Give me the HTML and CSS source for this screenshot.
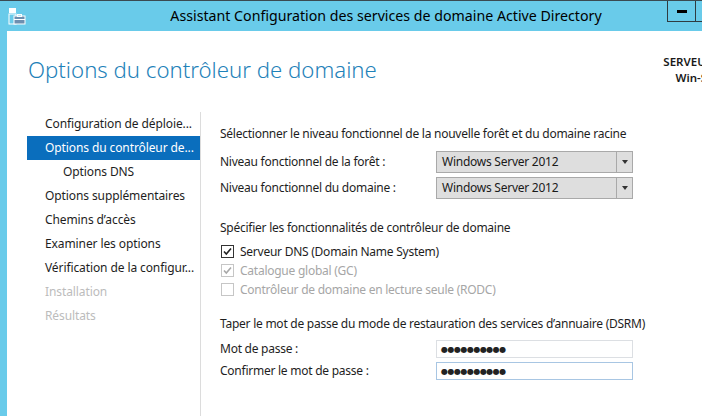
FILE: index.html
```html
<!DOCTYPE html>
<html lang="fr">
<head>
<meta charset="utf-8">
<title>Assistant Configuration des services de domaine Active Directory</title>
<link rel="stylesheet" href="styles.css">
</head>
<body>
<div class="window">
  <div class="titlebar">
    <div class="app-icon">
      <svg width="18" height="18" viewBox="0 0 18 18">
        <rect x="1" y="1" width="7" height="5" fill="#ffffff"/>
        <rect x="1" y="7" width="7" height="10" fill="none" stroke="#ffffff" stroke-width="1"/>
        <rect x="6" y="9" width="11" height="8" fill="#6d8fb0" stroke="#ffffff" stroke-width="1"/>
        <rect x="9.5" y="7.5" width="4" height="2" fill="none" stroke="#ffffff" stroke-width="1"/>
        <line x1="6" y1="12.5" x2="17" y2="12.5" stroke="#ffffff" stroke-width="1"/>
      </svg>
    </div>
    <div class="title">Assistant Configuration des services de domaine Active Directory</div>
    <div class="buttons">
      <div class="btn btn-min"><span class="min-bar"></span></div>
      <div class="btn btn-max"></div>
      <div class="btn btn-close"></div>
    </div>
  </div>
  <div class="frame">
    <div class="client">
      <div class="header">
        <h1 class="heading">Options du contrôleur de domaine</h1>
        <div class="server">
          <div class="server-label">SERVEUR CIBLE</div>
          <div class="server-name">Win-SRV2012</div>
        </div>
      </div>
      <div class="body">
        <nav class="nav">
          <div class="nav-item">Configuration de déploie...</div>
          <div class="nav-item selected">Options du contrôleur de...</div>
          <div class="nav-item sub">Options DNS</div>
          <div class="nav-item">Options supplémentaires</div>
          <div class="nav-item">Chemins d’accès</div>
          <div class="nav-item">Examiner les options</div>
          <div class="nav-item">Vérification de la configur...</div>
          <div class="nav-item disabled">Installation</div>
          <div class="nav-item disabled">Résultats</div>
        </nav>
        <div class="content">
          <div class="section-title">Sélectionner le niveau fonctionnel de la nouvelle forêt et du domaine racine</div>
          <div class="form-row">
            <div class="label">Niveau fonctionnel de la forêt :</div>
            <div class="combo"><span class="combo-text">Windows Server 2012</span><span class="combo-arrow"><span class="tri"></span></span></div>
          </div>
          <div class="form-row">
            <div class="label">Niveau fonctionnel du domaine :</div>
            <div class="combo"><span class="combo-text">Windows Server 2012</span><span class="combo-arrow"><span class="tri"></span></span></div>
          </div>
          <div class="section-title second">Spécifier les fonctionnalités de contrôleur de domaine</div>
          <div class="check-row">
            <span class="box checked">
              <svg width="11" height="11" viewBox="0 0 11 11"><path d="M2 5.5 L4.3 8 L9 2.5" fill="none" stroke="#222222" stroke-width="1.6"/></svg>
            </span>
            <span class="check-label">Serveur DNS (Domain Name System)</span>
          </div>
          <div class="check-row dis">
            <span class="box checked">
              <svg width="11" height="11" viewBox="0 0 11 11"><path d="M2 5.5 L4.3 8 L9 2.5" fill="none" stroke="#a8a8a8" stroke-width="1.6"/></svg>
            </span>
            <span class="check-label">Catalogue global (GC)</span>
          </div>
          <div class="check-row dis">
            <span class="box"></span>
            <span class="check-label">Contrôleur de domaine en lecture seule (RODC)</span>
          </div>
          <div class="section-title third">Taper le mot de passe du mode de restauration des services d’annuaire (DSRM)</div>
          <div class="pw-row">
            <div class="label">Mot de passe :</div>
            <div class="pw">●●●●●●●●●●</div>
          </div>
          <div class="pw-row">
            <div class="label">Confirmer le mot de passe :</div>
            <div class="pw focus">●●●●●●●●●●</div>
          </div>
        </div>
      </div>
    </div>
  </div>
</div>
</body>
</html>
```
FILE: styles.css
```css
html, body {
  margin: 0;
  padding: 0;
  width: 702px;
  height: 416px;
  overflow: hidden;
  background: #ffffff;
}
body {
  font-family: "Noto Sans", "Open Sans", "DejaVu Sans", sans-serif;
  font-size: 12px;
  color: #1e1e1e;
}
.window {
  width: 770px;
  height: 416px;
  display: flex;
  flex-direction: column;
  background: #69cbea;
}
.titlebar {
  height: 30px;
  border-top: 1px solid #3a4a52;
  display: flex;
  align-items: flex-start;
  flex-shrink: 0;
}
.app-icon {
  width: 18px;
  height: 18px;
  margin: 6px 0 0 8px;
}
.title {
  flex: 1;
  text-align: center;
  font-size: 14.2px;
  line-height: 29px;
  color: #000000;
  padding-left: 79px;
  white-space: nowrap;
}
.buttons {
  display: flex;
  height: 21px;
}
.btn {
  height: 20px;
  border: 1px solid #2f3b40;
  border-top: none;
}
.btn-min {
  width: 27px;
  display: flex;
  align-items: center;
  justify-content: center;
}
.min-bar {
  width: 10px;
  height: 3px;
  background: #000000;
  margin-top: 1px;
}
.btn-max {
  width: 26px;
  border-left: none;
}
.btn-close {
  width: 46px;
  border-left: none;
  background: #c7504b;
}
.frame {
  flex: 1;
  padding: 0 0 0 7px;
  display: flex;
}
.client {
  flex: 1;
  background: #ffffff;
  display: flex;
  flex-direction: column;
}
.header {
  height: 81px;
  display: flex;
  justify-content: space-between;
  align-items: flex-start;
  padding: 0 22px 0 21px;
  flex-shrink: 0;
}
.heading {
  margin: 24px 0 0 0;
  font-family: "Noto Sans", "Open Sans", sans-serif;
  font-weight: 300;
  font-size: 22.2px;
  line-height: 30px;
  color: #1f82b9;
}
.server {
  margin-top: 23px;
  text-align: right;
  font-size: 11.5px;
  font-weight: 600;
  line-height: 16px;
  color: #1a1a1a;
  white-space: nowrap;
}
.body {
  flex: 1;
  display: flex;
}
.nav {
  width: 173px;
  padding: 0 0 0 20px;
  border-right: 1px solid #dcdcdc;
  display: flex;
  flex-direction: column;
  flex-shrink: 0;
}
.nav-item {
  height: 24px;
  line-height: 24px;
  padding-left: 18px;
  white-space: nowrap;
  overflow: hidden;
  color: #1e1e1e;
  letter-spacing: -0.1px;
}
.nav-item.selected {
  background: #0a6ebd;
  color: #ffffff;
}
.nav-item.sub {
  padding-left: 36px;
}
.nav-item.disabled {
  color: #bcbcbc;
}
.content {
  flex: 1;
  padding: 13px 0 0 19px;
  letter-spacing: -0.25px;
  white-space: nowrap;
}
.section-title {
  height: 18px;
  line-height: 18px;
  margin-bottom: 8px;
}
.section-title.second {
  margin-top: 20px;
  margin-bottom: 5px;
}
.section-title.third {
  margin-top: 16px;
  margin-bottom: 7px;
}
.form-row {
  display: flex;
  align-items: center;
  height: 22px;
  margin-bottom: 4px;
}
.label {
  width: 216px;
  line-height: 18px;
}
.combo {
  width: 195px;
  height: 20px;
  border: 1px solid #a9a9a9;
  background: #dedede;
  display: flex;
}
.combo-text {
  flex: 1;
  padding-left: 5px;
  line-height: 20px;
  color: #1a1a1a;
}
.combo-arrow {
  width: 15px;
  border-left: 1px solid #a9a9a9;
  display: flex;
  align-items: center;
  justify-content: center;
}
.tri {
  width: 0;
  height: 0;
  border-left: 3.5px solid transparent;
  border-right: 3.5px solid transparent;
  border-top: 4px solid #333333;
}
.check-row {
  display: flex;
  align-items: center;
  height: 19px;
}
.box {
  width: 11px;
  height: 11px;
  border: 1px solid #333333;
  background: #ffffff;
  margin-left: 1px;
  margin-right: 6px;
  display: flex;
}
.check-row.dis .box {
  border-color: #c6c6c6;
}
.check-row.dis .check-label {
  color: #a6a6a6;
}
.pw-row {
  display: flex;
  align-items: center;
  height: 18px;
  margin-bottom: 4px;
}
.pw {
  width: 191px;
  height: 16px;
  border: 1px solid #dcdfe3;
  padding-left: 4px;
  font-size: 8px;
  line-height: 16px;
  letter-spacing: -0.5px;
  color: #222222;
}
.pw.focus {
  border-color: #a8c6e3;
}
```
